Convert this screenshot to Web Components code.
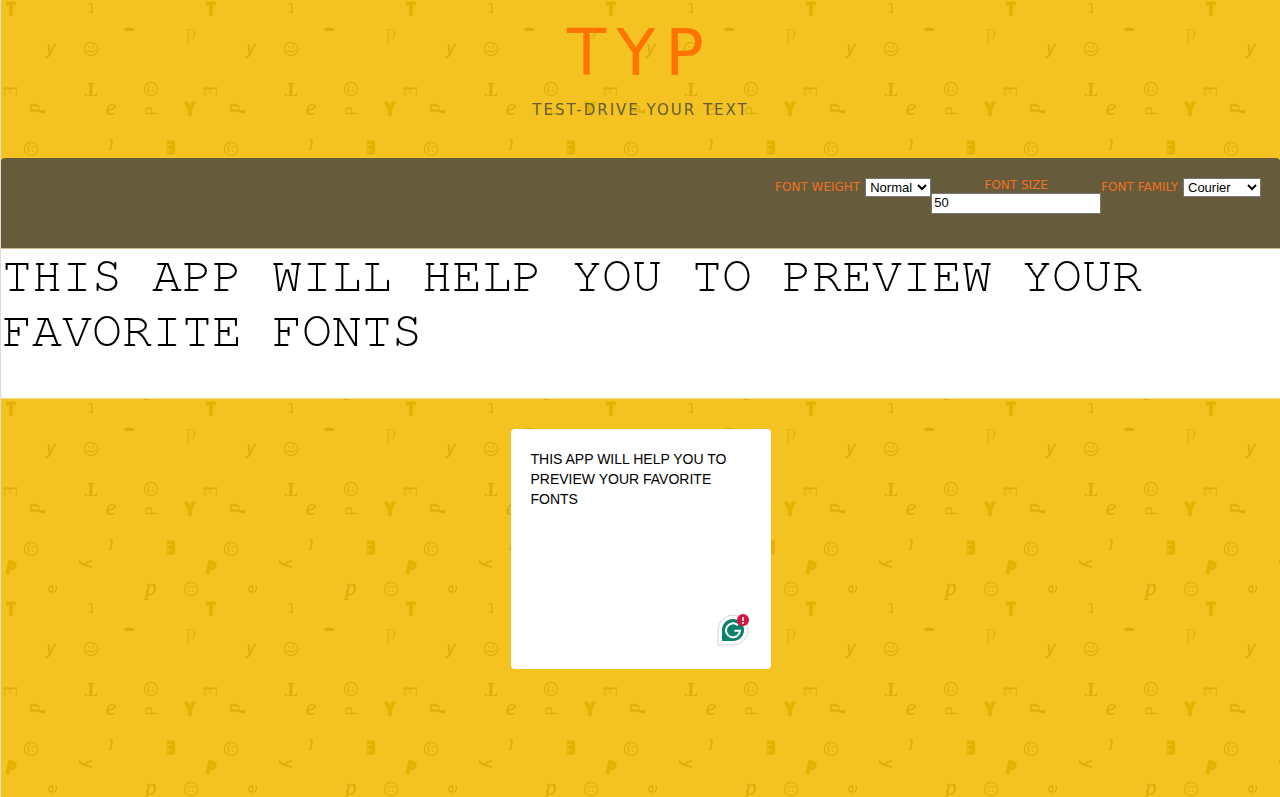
<!DOCTYPE html>
<html lang="en">
<head>
<meta charset="utf-8">
<title>TYP</title>
<style>
  html { min-height: 100%; }
  body { margin: 0; font-family: "DejaVu Sans", sans-serif; }
</style>
</head>
<body>
<typ-app>
  <typ-header slot="header" heading="TYP">Test-drive your text</typ-header>
  <typ-toolbar slot="toolbar"></typ-toolbar>
  <typ-preview slot="preview">THIS APP WILL HELP YOU TO PREVIEW YOUR FAVORITE FONTS</typ-preview>
  <typ-editor slot="editor">THIS APP WILL HELP YOU TO PREVIEW YOUR FAVORITE FONTS</typ-editor>
</typ-app>
<script>
const define = (name, html, setup) => {
  const template = document.createElement('template');
  template.innerHTML = html;
  customElements.define(name, class extends HTMLElement {
    constructor() {
      super();
      this.attachShadow({ mode: 'open' }).append(template.content.cloneNode(true));
    }
    connectedCallback() { if (setup) setup(this, this.shadowRoot); }
  });
};

// Repeating 200px tile of scattered letters and smileys.
const glyph = (char, x, y, turn, size, font, extra = '') =>
  `<text transform='translate(${x} ${y}) rotate(${turn})' y='${Math.round(size * 0.36)}' font-size='${size}' font-family='${font}' ${extra}>${char}</text>`;
const smiley = (x, y, turn) =>
  `<g transform='translate(${x} ${y}) rotate(${turn})' fill='none' stroke='#dfae0c' stroke-width='1.2'><circle r='6.6'/><path d='M-3.5 1.5Q0 4.5 3.5 1.5M-2-3v2M2-3v2'/></g>`;
const SANS = 'Open Sans', SERIF = 'Liberation Serif', ITALIC = "font-style='italic'";
const BOLD = "font-weight='800' fill='#e3b203' stroke='#e3b203'";
const tile = `<svg xmlns='http://www.w3.org/2000/svg' width='200' height='200'><g fill='#dfae0c' text-anchor='middle'>` +
  glyph('T', 10, 9, 0, 17, SANS, BOLD) +
  glyph('t', 90, 9, 180, 17, SANS) +
  `<path d='M123 28h10v3h-9z'/>` +
  glyph('p', 190, 31, 0, 21, SERIF, "opacity='.7'") +
  glyph('y', 50, 48, 0, 18, SANS, ITALIC + " font-weight='600'") +
  smiley(90, 49, 0) +
  glyph('E', 9, 91, 90, 18, SERIF) +
  glyph('T', 90, 90, 180, 19, SERIF, "font-weight='700'") +
  smiley(150, 89, 90) +
  glyph('p', 32, 108, -90, 20, SERIF, ITALIC + " font-weight='700'") +
  glyph('e', 110, 106, 0, 24, SERIF, ITALIC + " stroke='#dfae0c' stroke-width='.4'") +
  glyph('P', 150, 111, -90, 16, SANS) +
  glyph('Y', 189, 109, 0, 17, SANS, BOLD) +
  smiley(30, 149, 90) +
  glyph('t', 110, 146, 180, 20, SERIF, ITALIC) +
  glyph('E', 170, 147, 180, 17, SANS, BOLD) +
  glyph('P', 10, 168, 0, 17, SANS, BOLD + ' ' + ITALIC) +
  glyph('y', 88, 164, 90, 17, SANS, "font-weight='600'") +
  glyph('e', 50, 189, -90, 17, SANS) +
  glyph('p', 150, 187, 0, 23, SERIF, ITALIC + " stroke='#dfae0c' stroke-width='.4'") +
  smiley(190, 189, 180) +
  `</g></svg>`;

define('typ-app', `
  <style>
    :host {
      display: block;
      box-sizing: border-box;
      min-height: 100vh;
      border-left: 1px solid #dcdcd4;
      background-color: #f5c321;
    }
    main { display: flex; justify-content: center; padding: 30px 20px; }
  </style>
  <slot name="header"></slot>
  <slot name="toolbar"></slot>
  <slot name="preview"></slot>
  <main><slot name="editor"></slot></main>
`, host => {
  host.style.backgroundImage = `url("data:image/svg+xml,${encodeURIComponent(tile)}")`;
});

define('typ-header', `
  <style>
    :host { display: block; padding: 15px 0 38px; text-align: center; text-transform: uppercase; }
    h1 { margin: 0; font-size: 64px; line-height: 76px; font-weight: 400; letter-spacing: 10px; color: #ff7300; }
    p { margin: 9px 0 0; font-size: 15px; line-height: 20px; letter-spacing: 2px; color: #665c3c; }
  </style>
  <header><h1></h1><p><slot></slot></p></header>
`, (host, root) => {
  root.querySelector('h1').textContent = host.getAttribute('heading');
});

define('typ-toolbar', `
  <style>
    :host {
      display: block;
      box-sizing: border-box;
      min-height: 90px;
      padding: 20px 19px;
      border-radius: 4px 4px 0 0;
      background: #665c3c;
    }
    form { display: flex; justify-content: flex-end; align-items: flex-start; }
    div { display: flex; align-items: center; gap: 5px; }
    .stack { display: block; text-align: center; }
    label { font: 12px/15px "DejaVu Sans", Verdana, sans-serif; text-transform: uppercase; color: #f26f21; }
    .stack label { display: block; }
    select, input {
      box-sizing: border-box;
      border: 1px solid #767676;
      background: #fff;
      color: #000;
      font: 13px "Liberation Sans", Arial, sans-serif;
    }
    select { height: 19px; padding: 0; border-radius: 0; }
    #weight { width: 66px; }
    #family { width: 78px; }
    input { display: block; width: 170px; height: 21px; padding: 0 2px 2px; }
  </style>
  <form>
    <div><label for="weight">Font weight</label>
      <select id="weight"><option>Normal</option><option>Bold</option></select></div>
    <div class="stack"><label for="size">Font size</label>
      <input id="size" type="text" value="50"></div>
    <div><label for="family">Font family</label>
      <select id="family"><option>Courier</option><option>Arial</option><option>Verdana</option></select></div>
  </form>
`);

define('typ-preview', `
  <style>
    :host {
      display: block;
      box-sizing: border-box;
      min-height: 151px;
      padding: 0 1px;
      border-top: 1px solid #cdbd8b;
      border-bottom: 1px solid #ecd98c;
      background: #fff;
      color: #000;
      font: 50px/55px "FreeMono", "Nimbus Mono PS", "Liberation Mono", "Courier New", monospace;
    }
  </style>
  <slot></slot>
`);

define('typ-editor', `
  <style>
    :host { display: block; position: relative; width: 260px; }
    textarea {
      display: block;
      box-sizing: border-box;
      width: 100%;
      height: 240px;
      padding: 20px;
      border: 0;
      border-radius: 4px;
      outline: 0;
      resize: none;
      background: #fff;
      color: #000;
      font: 14px/20px "Liberation Sans", Arial, sans-serif;
    }
    button { position: absolute; right: 22px; bottom: 23px; padding: 0; border: 0; background: none; }
    svg { display: block; }
  </style>
  <textarea aria-label="Your text"></textarea>
  <button type="button" aria-label="Writing suggestions">
    <svg width="32" height="32" viewBox="0 0 32 32">
      <path d="M1 31V16A15 15 0 1 1 16 31z" fill="#fff" stroke="#d0d3df"/>
      <path d="M5 27V16A11 11 0 1 1 16 27z" fill="#0b806a"/>
      <path d="M20.8 11.2A7 7 0 1 0 23 16.8H17.4M23 16.2V17" fill="none" stroke="#fff" stroke-width="2"/>
      <circle cx="26" cy="6" r="6" fill="#d3163f"/>
      <path d="M26 3v4M26 8v2" stroke="#fff" stroke-width="1.6"/>
    </svg>
  </button>
`, (host, root) => {
  root.querySelector('textarea').value = host.textContent.trim();
});
</script>
</body>
</html>
